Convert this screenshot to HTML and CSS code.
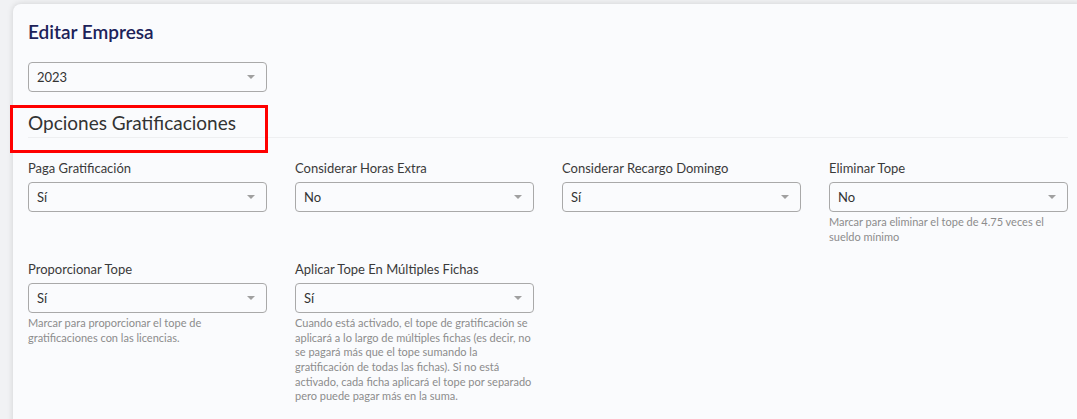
FILE: index.html
```html
<!DOCTYPE html>
<html lang="es">
<head>
<meta charset="utf-8">
<title>Editar Empresa</title>
<link rel="stylesheet" href="styles.css">
</head>
<body>
<div class="card">
  <h1 class="title">Editar Empresa</h1>
  <div class="select year"><span>2023</span><i class="caret"></i></div>
  <h2 class="section">Opciones Gratificaciones</h2>
  <div class="grid">
    <div class="field">
      <label>Paga Gratificación</label>
      <div class="select"><span>Sí</span><i class="caret"></i></div>
    </div>
    <div class="field">
      <label>Considerar Horas Extra</label>
      <div class="select"><span>No</span><i class="caret"></i></div>
    </div>
    <div class="field">
      <label>Considerar Recargo Domingo</label>
      <div class="select"><span>Sí</span><i class="caret"></i></div>
    </div>
    <div class="field">
      <label>Eliminar Tope</label>
      <div class="select"><span>No</span><i class="caret"></i></div>
      <p class="help">Marcar para eliminar el tope de 4.75 veces el sueldo mínimo</p>
    </div>
    <div class="field">
      <label>Proporcionar Tope</label>
      <div class="select"><span>Sí</span><i class="caret"></i></div>
      <p class="help">Marcar para proporcionar el tope de gratificaciones con las licencias.</p>
    </div>
    <div class="field">
      <label>Aplicar Tope En Múltiples Fichas</label>
      <div class="select"><span>Sí</span><i class="caret"></i></div>
      <p class="help">Cuando está activado, el tope de gratificación se aplicará a lo largo de múltiples fichas (es decir, no se pagará más que el tope sumando la gratificación de todas las fichas). Si no está activado, cada ficha aplicará el tope por separado pero puede pagar más en la suma.</p>
    </div>
  </div>
</div>
<div class="highlight"></div>
</body>
</html>
```
FILE: styles.css
```css
html, body {
  margin: 0;
  padding: 0;
}
body {
  background: #f1f2f4;
  font-family: Lato, "Noto Sans", sans-serif;
  color: #333;
  overflow: hidden;
  height: 419px;
  padding: 4px 0 0 13px;
  box-sizing: border-box;
  position: relative;
}
.card {
  width: 1072px;
  box-sizing: border-box;
  min-height: 430px;
  background: #fafbfd;
  border-radius: 8px;
  box-shadow: 0 0 6px rgba(0, 0, 0, 0.14);
  padding: 16px 17px 0 15px;
}
.title {
  margin: 0;
  font-size: 19px;
  line-height: 24px;
  font-weight: 600;
  color: #1c2259;
}
.select {
  height: 30px;
  width: 239px;
  box-sizing: border-box;
  border: 1px solid #a9a9a9;
  border-radius: 4px;
  display: flex;
  align-items: center;
  justify-content: space-between;
  padding: 0 11px 0 8px;
  font-size: 13px;
  color: #333;
  background: #fafbfd;
}
.year {
  margin-top: 18px;
}
.caret {
  width: 0;
  height: 0;
  border-left: 4px solid transparent;
  border-right: 4px solid transparent;
  border-top: 4px solid #a0a0a0;
}
.section {
  margin: 19px 0 0;
  font-size: 19px;
  line-height: 24px;
  font-weight: 400;
  color: #333;
  padding-bottom: 2px;
  border-bottom: 1px solid #eeeff1;
}
.grid {
  display: grid;
  grid-template-columns: repeat(4, 239px);
  column-gap: 28px;
  row-gap: 17px;
  padding-top: 22px;
}
.field label {
  display: block;
  font-size: 13px;
  line-height: 16px;
  margin-bottom: 6px;
  color: #3a3a3a;
}
.help {
  margin: 3px 0 0;
  font-size: 11px;
  line-height: 14.6px;
  color: #8c8c8c;
}
.highlight {
  position: absolute;
  left: 10px;
  top: 105px;
  width: 258px;
  height: 48px;
  box-sizing: border-box;
  border: 3px solid #ff0000;
}
```
